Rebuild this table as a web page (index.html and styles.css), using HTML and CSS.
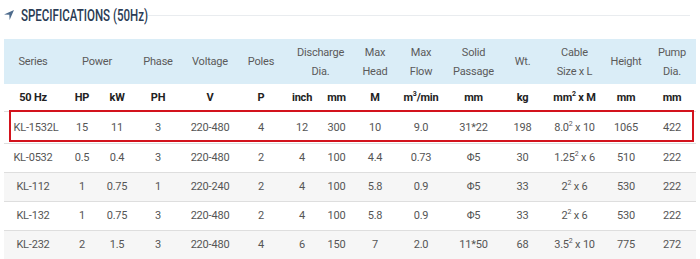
FILE: index.html
```html
<html>
<head>
	<link rel="stylesheet" href="styles.css">
</head>
<body>
	<div class="section">
		<div class="heading">
			<svg class="heading_icon" viewBox="0 0 10 10" width="10" height="10">
				<path d="M10 0 L0 4.4 L5.3 4.7 L5.6 10 Z" fill="#4d6b8c"/>
			</svg>
			<span class="heading_text">SPECIFICATIONS (50Hz)</span>
			<span class="heading_line"></span>
		</div>
		<div class="table_wrap">
			<table class="spec">
				<colgroup>
					<col style="width:58px"><col style="width:40px"><col style="width:30px">
					<col style="width:52px"><col style="width:52px"><col style="width:50px">
					<col style="width:32px"><col style="width:37px"><col style="width:40px">
					<col style="width:52px"><col style="width:53px"><col style="width:45px">
					<col style="width:59px"><col style="width:44px"><col style="width:48px">
				</colgroup>
				<tr class="head">
					<td>Series</td>
					<td colspan="2">Power</td>
					<td>Phase</td>
					<td>Voltage</td>
					<td>Poles</td>
					<td colspan="2">Discharge<br>Dia.</td>
					<td>Max<br>Head</td>
					<td>Max<br>Flow</td>
					<td>Solid<br>Passage</td>
					<td>Wt.</td>
					<td>Cable<br>Size x L</td>
					<td>Height</td>
					<td>Pump<br>Dia.</td>
				</tr>
				<tr class="units">
					<td>50 Hz</td><td>HP</td><td>kW</td><td>PH</td><td>V</td><td>P</td>
					<td>inch</td><td>mm</td><td>M</td><td>m<sup>3</sup>/min</td><td>mm</td>
					<td>kg</td><td>mm<sup>2</sup> x M</td><td>mm</td><td>mm</td>
				</tr>
				<tr class="row first">
					<td class="model">KL-1532L</td><td>15</td><td>11</td><td>3</td><td>220-480</td><td>4</td>
					<td>12</td><td>300</td><td>10</td><td>9.0</td><td>31*22</td>
					<td>198</td><td>8.0<sup>2</sup> x 10</td><td>1065</td><td>422</td>
				</tr>
				<tr class="row">
					<td>KL-0532</td><td>0.5</td><td>0.4</td><td>3</td><td>220-480</td><td>2</td>
					<td>4</td><td>100</td><td>4.4</td><td>0.73</td><td>&Phi;5</td>
					<td>30</td><td>1.25<sup>2</sup> x 6</td><td>510</td><td>222</td>
				</tr>
				<tr class="row grey">
					<td>KL-112</td><td>1</td><td>0.75</td><td>1</td><td>220-240</td><td>2</td>
					<td>4</td><td>100</td><td>5.8</td><td>0.9</td><td>&Phi;5</td>
					<td>33</td><td>2<sup>2</sup> x 6</td><td>530</td><td>222</td>
				</tr>
				<tr class="row">
					<td>KL-132</td><td>1</td><td>0.75</td><td>3</td><td>220-480</td><td>2</td>
					<td>4</td><td>100</td><td>5.8</td><td>0.9</td><td>&Phi;5</td>
					<td>33</td><td>2<sup>2</sup> x 6</td><td>530</td><td>222</td>
				</tr>
				<tr class="row grey">
					<td>KL-232</td><td>2</td><td>1.5</td><td>3</td><td>220-480</td><td>4</td>
					<td>6</td><td>150</td><td>7</td><td>2.0</td><td>11*50</td>
					<td>68</td><td>3.5<sup>2</sup> x 10</td><td>775</td><td>272</td>
				</tr>
			</table>
			<div class="highlight"></div>
		</div>
	</div>
</body>
</html>
```

FILE: styles.css
```css
body
{
	margin: 0;
	background-color: white;
	font-family: Roboto, "Liberation Sans", sans-serif;
}
.section
{
	padding: 0 4px;
}
.heading
{
	display: flex;
	align-items: center;
	height: 30px;
	margin-bottom: 9px;
}
.heading_icon
{
	margin-right: 7px;
}
/* no condensed face installed, so squeeze the regular one */
.heading_text
{
	display: inline-block;
	width: 114px;
	white-space: nowrap;
	font-size: 16px;
	color: #2b3c55;
	font-weight: 500;
	transform: scaleX(0.72);
	transform-origin: left center;
}
.heading_line
{
	flex: 1;
	height: 1px;
	margin-left: 13px;
	margin-right: 6px;
	background-color: #e9ecef;
}
.table_wrap
{
	position: relative;
}
.spec
{
	width: 692px;
	table-layout: fixed;
	border-collapse: collapse;
	font-size: 11px;
	letter-spacing: -0.2px;
	color: #555;
	text-align: center;
}
.spec td
{
	padding: 0;
}
.spec .model
{
	padding-left: 6px;
}
.head
{
	height: 45px;
	background-color: #daedf7;
	line-height: 19px;
	color: #5a5a5a;
}
.units
{
	height: 27px;
	font-weight: bold;
	color: #222;
}
.row
{
	height: 29px;
	border-top: 1px solid #dedede;
}
.row.first
{
	height: 32px;
}
.grey
{
	background-color: #f6f6f6;
}
sup
{
	font-size: 7px;
	vertical-align: 5px;
	line-height: 0;
}
.highlight
{
	position: absolute;
	left: 5px;
	right: 2px;
	top: 71px;
	height: 28px;
	border: 2px solid #d3131d;
}
```
